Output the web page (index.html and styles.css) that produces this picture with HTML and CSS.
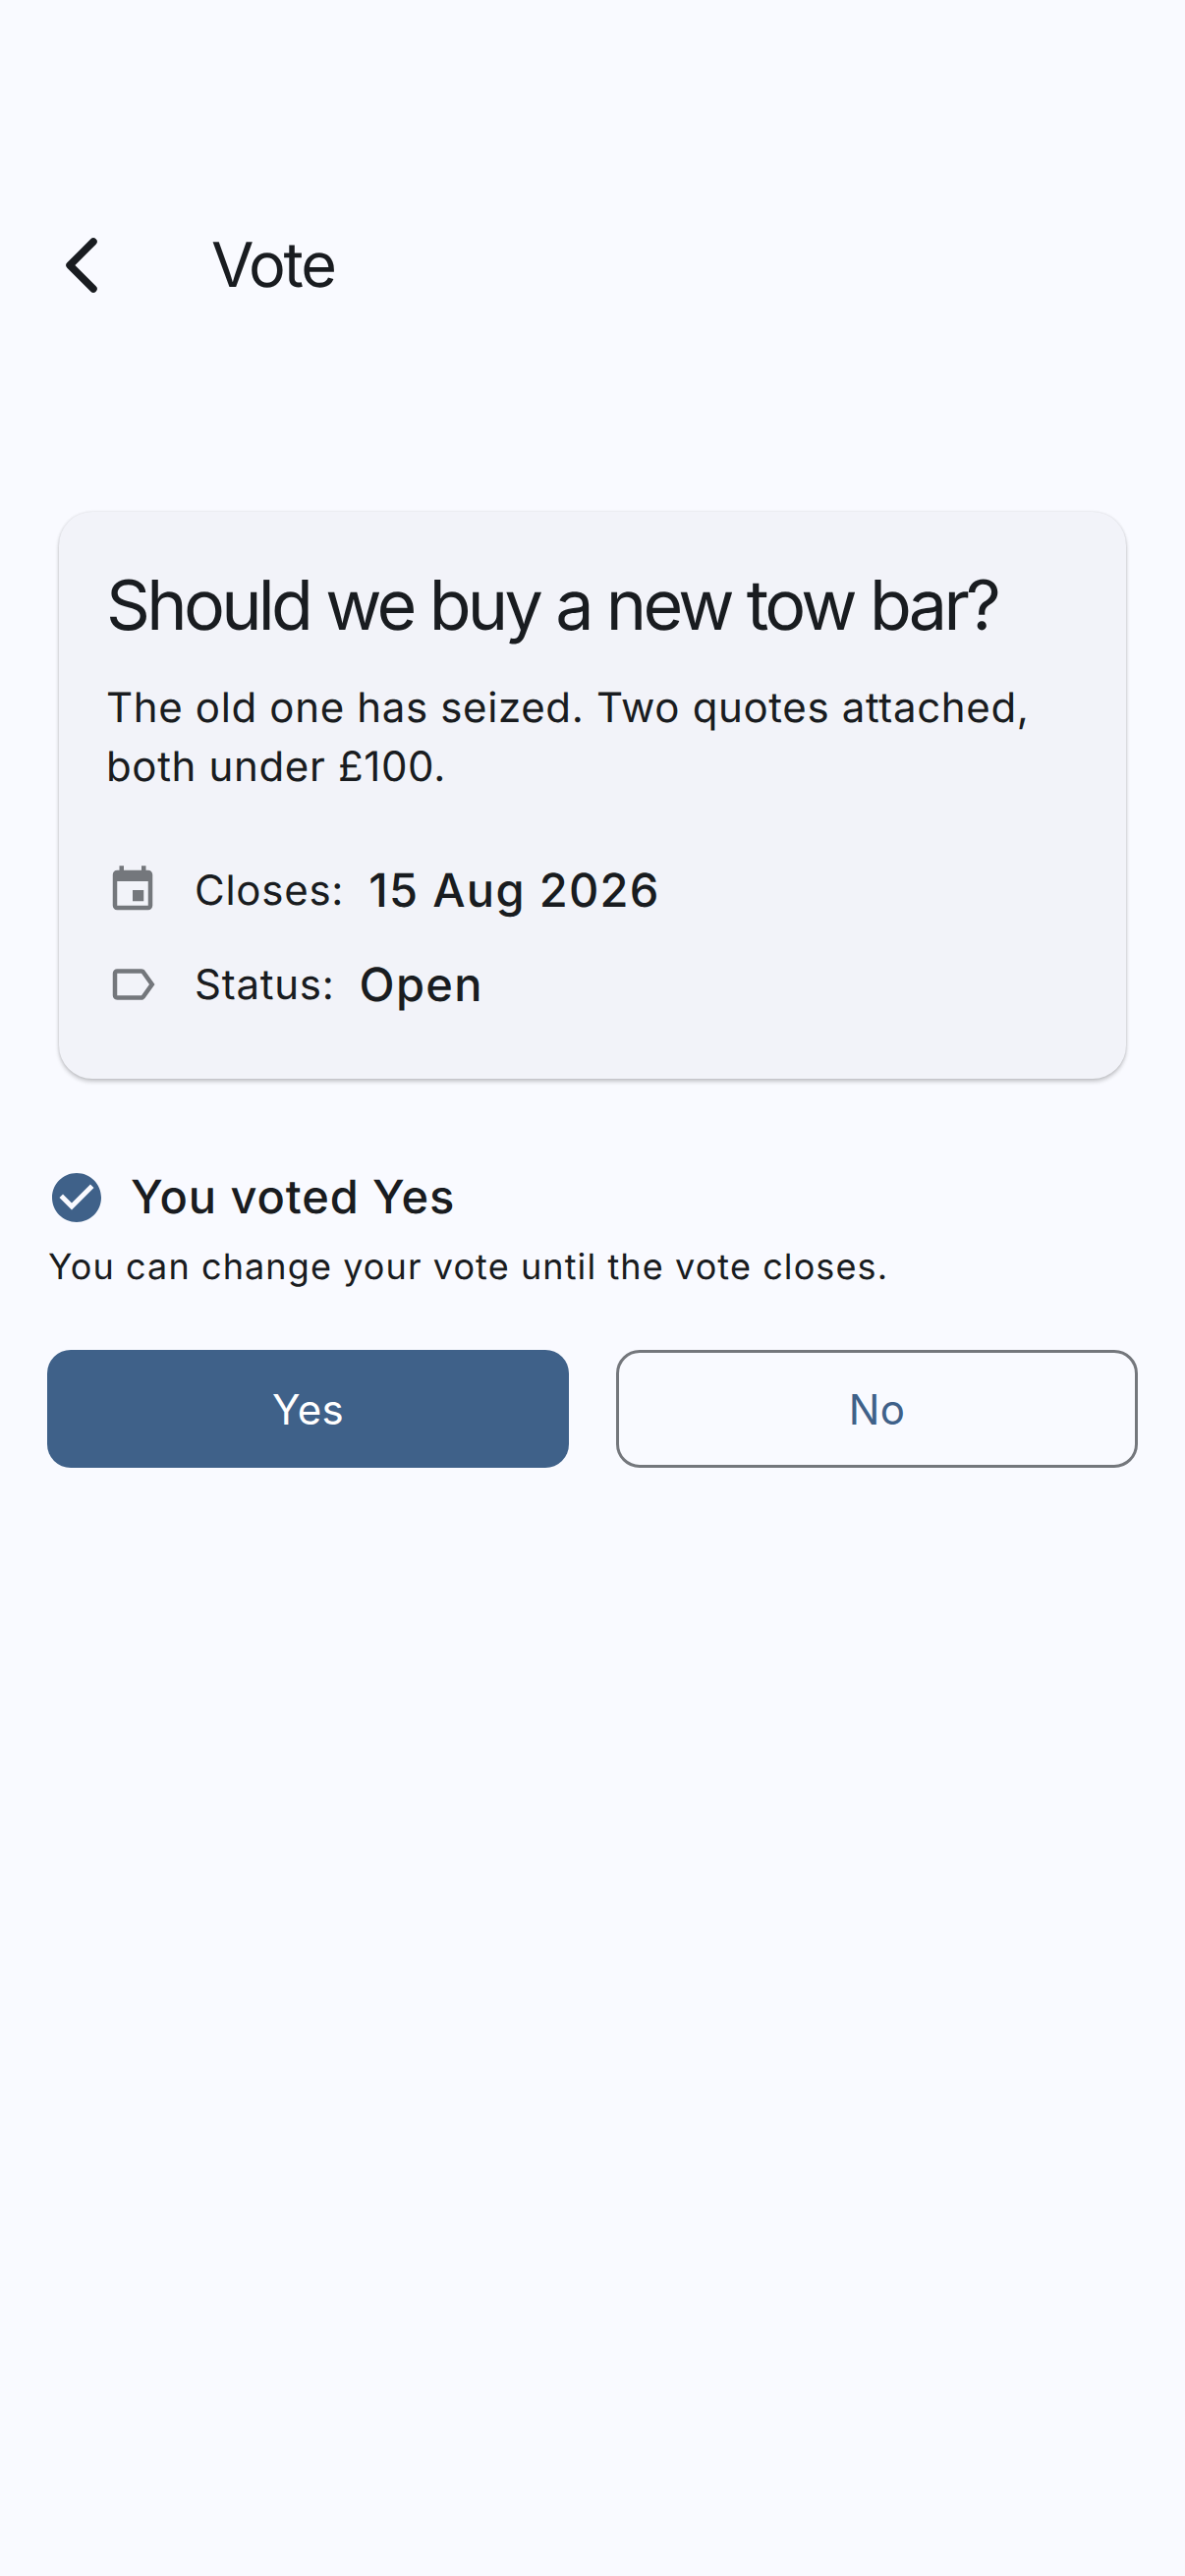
FILE: index.html
```html
<!DOCTYPE html>
<html lang="en">
<head>
    <meta charset="UTF-8">
    <meta name="viewport" content="width=device-width, initial-scale=1.0">
    <title>Vote</title>
    <link rel="stylesheet" href="styles.css">
</head>
<body>
    <header class="app-bar">
        <svg class="back-icon" width="48" height="64" viewBox="0 0 48 64">
            <path d="M35 8 L11 32 L35 56" fill="none" stroke="#191c20" stroke-width="7.5" stroke-linecap="round" stroke-linejoin="round"/>
        </svg>
        <h1>Vote</h1>
    </header>

    <section class="card">
        <h2>Should we buy a new tow bar?</h2>
        <p class="summary">The old one has seized. Two quotes attached, both under £100.</p>
        <div class="meta-row">
            <svg class="meta-icon" width="54" height="54" viewBox="0 0 24 24">
                <path fill="#74777c" d="M17 12h-5v5h5v-5zM16 1v2H8V1H6v2H5c-1.11 0-1.99.9-1.99 2L3 19c0 1.1.89 2 2 2h14c1.1 0 2-.9 2-2V5c0-1.1-.9-2-2-2h-1V1h-2zm3 18H5V8h14v11z"/>
            </svg>
            <span class="meta-label">Closes:</span>
            <span class="meta-value">15 Aug 2026</span>
        </div>
        <div class="meta-row">
            <svg class="meta-icon" width="54" height="54" viewBox="0 0 24 24">
                <path fill="#74777c" d="M17.63 5.84C17.27 5.33 16.67 5 16 5L5 5.01C3.9 5.01 3 5.9 3 7v10c0 1.1.9 1.99 2 1.99L16 19c.67 0 1.27-.33 1.63-.84L22 12l-4.37-6.16zM16 17H5V7h11l3.55 5L16 17z"/>
            </svg>
            <span class="meta-label">Status:</span>
            <span class="meta-value">Open</span>
        </div>
    </section>

    <div class="vote-status">
        <svg width="50" height="50" viewBox="2 2 20 20">
            <path fill="#3f6189" d="M12 2C6.48 2 2 6.48 2 12s4.48 10 10 10 10-4.48 10-10S17.52 2 12 2zm-2 15l-5-5 1.41-1.41L10 14.17l7.59-7.59L19 8l-9 9z"/>
        </svg>
        <span>You voted Yes</span>
    </div>
    <p class="vote-note">You can change your vote until the vote closes.</p>

    <div class="vote-buttons">
        <button class="btn btn-yes" type="button">Yes</button>
        <button class="btn btn-no" type="button">No</button>
    </div>
</body>
</html>
```

FILE: styles.css
```css
body {
    font-family: 'Inter', sans-serif;
    margin: 0;
    height: 2622px;
    background-color: #f9faff;
    color: #191c20;
    overflow: hidden;
    text-rendering: geometricPrecision;
}
.app-bar {
    display: flex;
    align-items: center;
    padding: 238px 0 0 60px;
    height: 64px;
}
.back-icon {
    margin-right: 107px;
}
h1 {
    font-size: 63px;
    font-weight: 400;
    letter-spacing: -2.3px;
    margin: 0;
}
.card {
    margin: 219px 60px 0 60px;
    height: 577px;
    box-sizing: border-box;
    padding: 57px 48px 0 48px;
    background-color: #f2f3f9;
    border-radius: 34px;
    box-shadow: 0 3px 4px rgba(0, 0, 0, 0.2), 0 0 3px rgba(0, 0, 0, 0.12);
}
h2 {
    font-size: 70px;
    font-weight: 400;
    letter-spacing: -3.7px;
    line-height: 76px;
    margin: 0;
}
.summary {
    font-size: 42px;
    line-height: 60px;
    letter-spacing: 0.65px;
    margin: 37px 0 47px 0;
}
.meta-row {
    display: flex;
    align-items: center;
    height: 96px;
}
.meta-icon {
    margin-right: 36px;
}
.meta-label {
    font-size: 42px;
    letter-spacing: 0.75px;
    margin-right: 25px;
}
.meta-value {
    font-size: 47px;
    font-weight: 500;
    letter-spacing: 1.3px;
}
.vote-status {
    display: flex;
    align-items: center;
    gap: 30px;
    margin: 92px 48px 0 53px;
    font-size: 47px;
    font-weight: 500;
    letter-spacing: 0.9px;
}
.vote-note {
    font-size: 36px;
    letter-spacing: 1.1px;
    margin: 20px 48px 0 49px;
}
.vote-buttons {
    display: grid;
    grid-template-columns: 1fr 1fr;
    gap: 48px;
    margin: 63px 48px 0 48px;
}
.btn {
    height: 120px;
    font-family: 'Inter', sans-serif;
    font-size: 42px;
    font-weight: 400;
    letter-spacing: 0.3px;
    border-radius: 24px;
}
.btn-yes {
    background-color: #3f6189;
    color: #fff;
    border: none;
}
.btn-no {
    background-color: transparent;
    color: #3f6189;
    border: 3px solid #74777c;
}
```
